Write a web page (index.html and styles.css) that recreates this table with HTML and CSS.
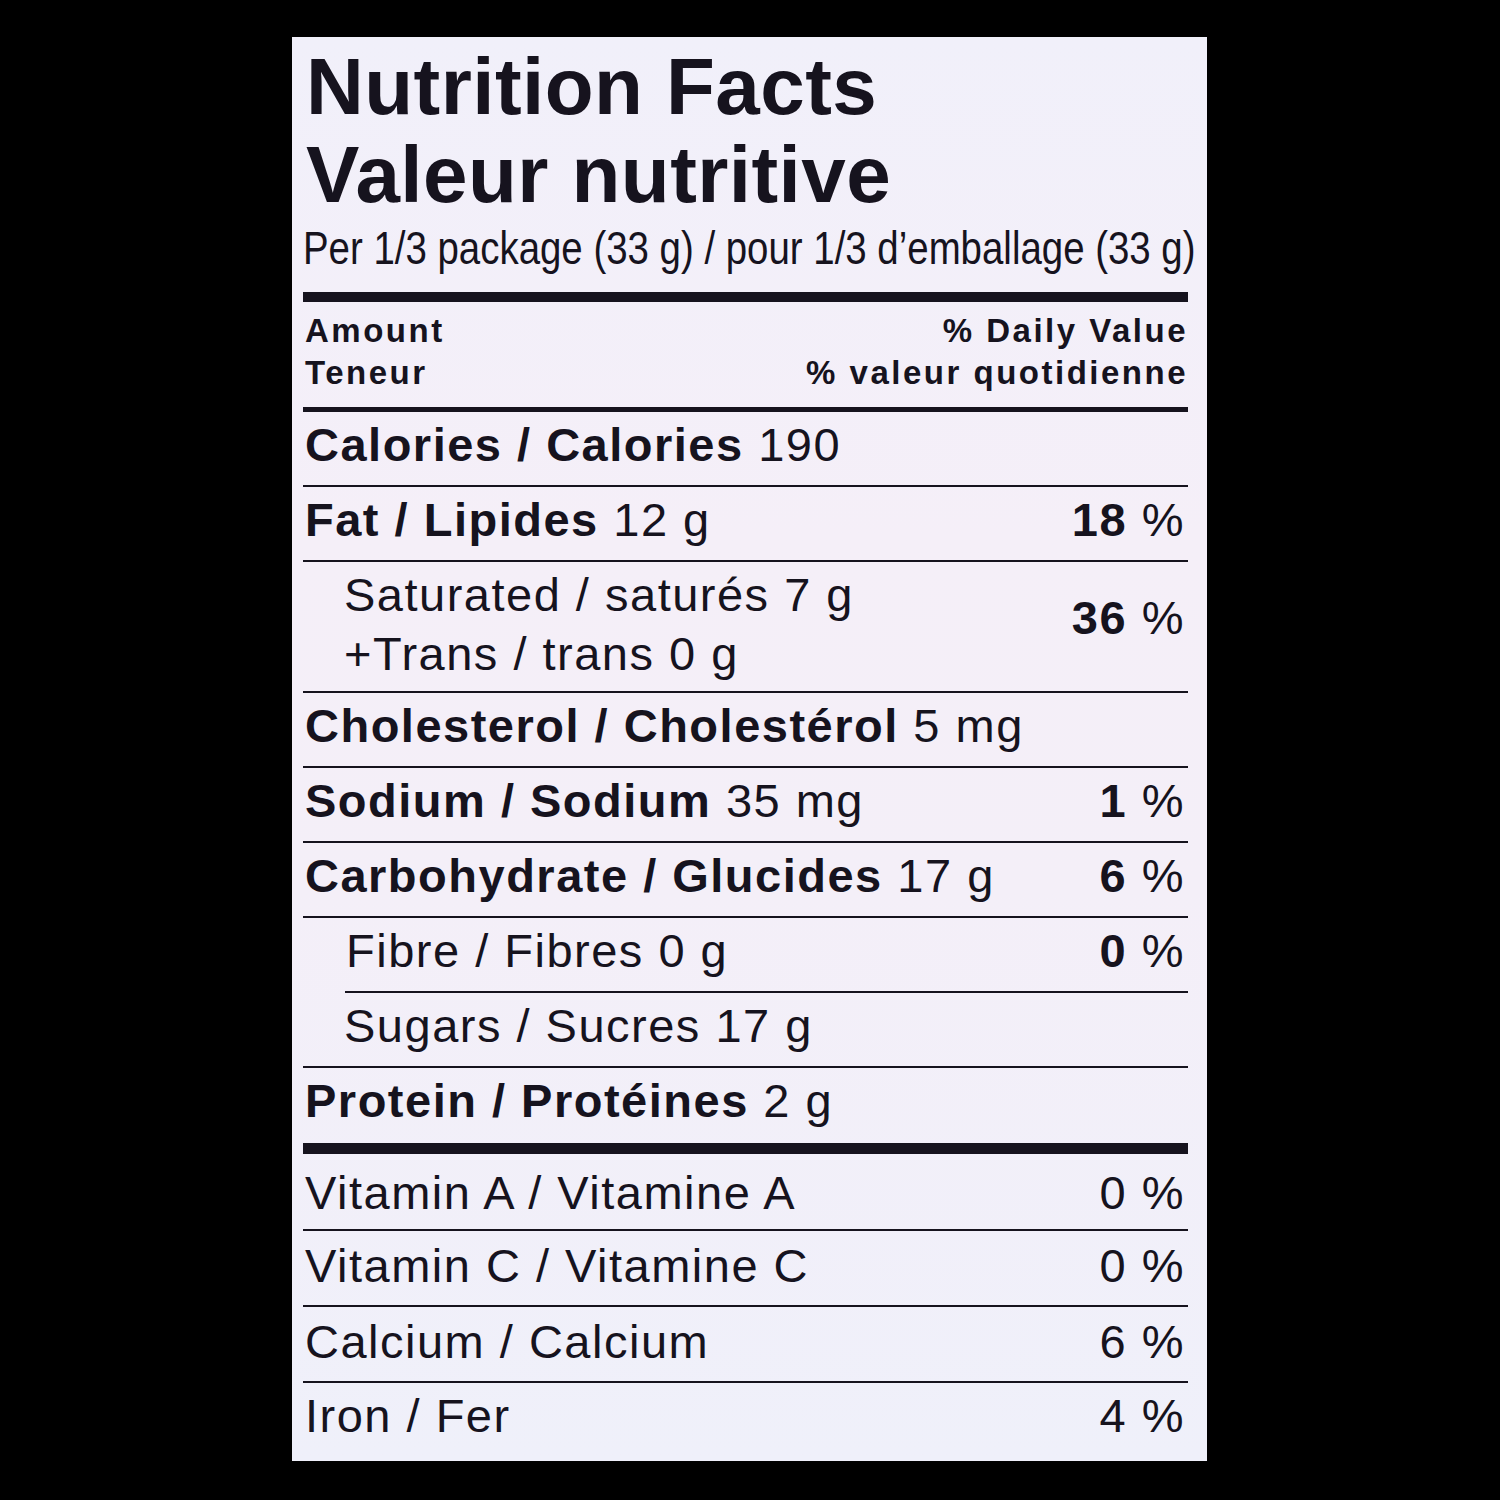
FILE: index.html
```html
<!DOCTYPE html>
<html lang="en">
<head>
<meta charset="utf-8">
<title>Nutrition Facts</title>
<link rel="stylesheet" href="styles.css">
</head>
<body>
<div class="label">
  <h1 class="title">Nutrition Facts<br>Valeur nutritive</h1>
  <div class="serving"><span class="serving-text">Per 1/3 package (33 g) / pour 1/3 d’emballage (33 g)</span></div>
  <div class="rule-thick"></div>
  <div class="head">
    <div class="head-col">
      <div>Amount</div>
      <div>Teneur</div>
    </div>
    <div class="head-col head-right">
      <div>% Daily Value</div>
      <div>% valeur quotidienne</div>
    </div>
  </div>
  <div class="rule-mid"></div>

  <div class="row"><span class="name"><b>Calories / Calories</b> 190</span></div>
  <div class="row"><span class="name"><b>Fat / Lipides</b> 12 g</span><span class="pct"><b>18</b> %</span></div>
  <div class="row row-double">
    <span class="name indent">Saturated / saturés 7 g<br>+Trans / trans 0 g</span>
    <span class="pct pct-mid"><b>36</b> %</span>
  </div>
  <div class="row"><span class="name"><b>Cholesterol / Cholestérol</b> 5 mg</span></div>
  <div class="row"><span class="name"><b>Sodium / Sodium</b> 35 mg</span><span class="pct"><b>1</b> %</span></div>
  <div class="row"><span class="name"><b>Carbohydrate / Glucides</b> 17 g</span><span class="pct"><b>6</b> %</span></div>
  <div class="row row-sub"><span class="name">Fibre / Fibres 0 g</span><span class="pct"><b>0</b> %</span></div>
  <div class="row"><span class="name indent">Sugars / Sucres 17 g</span></div>
  <div class="row row-protein"><span class="name"><b>Protein / Protéines</b> 2 g</span></div>

  <div class="row row-vit row-vit-first"><span class="name">Vitamin A / Vitamine A</span><span class="pct">0 %</span></div>
  <div class="row row-vit"><span class="name">Vitamin C / Vitamine C</span><span class="pct">0 %</span></div>
  <div class="row row-vit"><span class="name">Calcium / Calcium</span><span class="pct">6 %</span></div>
  <div class="row row-vit row-last"><span class="name">Iron / Fer</span><span class="pct">4 %</span></div>
</div>
</body>
</html>
```

FILE: styles.css
```css
html, body {
  margin: 0;
  padding: 0;
  background: #000;
}

body {
  width: 1500px;
  height: 1500px;
  font-family: "Liberation Sans", Arial, sans-serif;
  color: #16131e;
}

.label {
  margin: 37px 0 0 292px;
  width: 915px;
  height: 1424px;
  box-sizing: border-box;
  padding: 6px 19px 0 11px;
  background: linear-gradient(180deg, #f1f0fa 0%, #f5eff8 35%, #f4eff8 60%, #eff0fa 100%);
  overflow: hidden;
}

.title {
  margin: 0 0 0 3px;
  font-size: 80px;
  line-height: 88px;
  font-weight: 700;
  letter-spacing: 0.45px;
}

.serving {
  height: 58px;
  line-height: 58px;
  font-size: 46px;
  white-space: nowrap;
  margin-bottom: 15px;
}

.serving-text {
  display: inline-block;
  transform: scaleX(0.835);
  transform-origin: left center;
}

.rule-thick {
  height: 10px;
  background: #16131e;
}

.rule-mid {
  height: 5px;
  background: #16131e;
}

.head {
  display: flex;
  justify-content: space-between;
  padding: 8px 0 13px 2px;
  font-size: 33px;
  line-height: 42px;
  font-weight: 700;
  letter-spacing: 2.5px;
}

.head-right {
  text-align: right;
}

.row {
  display: flex;
  justify-content: space-between;
  align-items: flex-start;
  font-size: 47px;
  line-height: 66px;
  letter-spacing: 1.5px;
  padding: 0 3px 7px 2px;
  border-bottom: 2px solid #16131e;
  white-space: nowrap;
}

.row b {
  font-weight: 700;
}

.indent {
  padding-left: 39px;
}

.row-double {
  line-height: 59px;
  padding-top: 3px;
  padding-bottom: 8px;
}

.pct-mid {
  align-self: center;
  line-height: 66px;
  margin-bottom: 12px;
}

.row-sub {
  margin-left: 42px;
  padding-left: 1px;
}

.row-protein {
  padding-bottom: 9px;
  border-bottom: 11px solid #16131e;
}

.row-vit {
  padding-top: 2px;
  padding-bottom: 6px;
}

.row-vit-first {
  padding-top: 6px;
  padding-bottom: 3px;
}

.row-last {
  border-bottom: none;
  padding-top: 0;
  padding-bottom: 8px;
}
```
